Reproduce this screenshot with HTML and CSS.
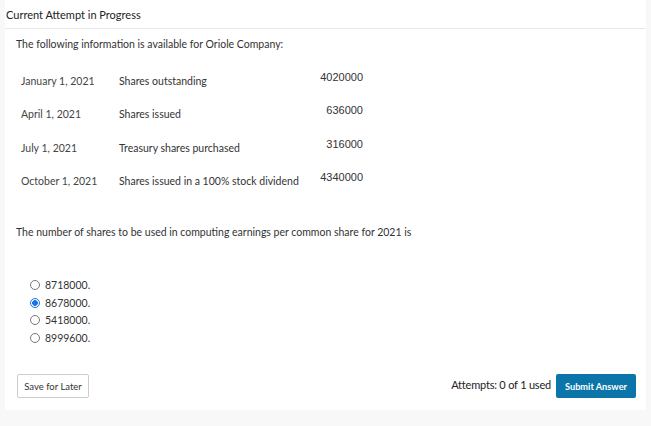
FILE: index.html
```html
<!DOCTYPE html>
<html>
<head>
<meta charset="utf-8">
<link rel="stylesheet" href="styles.css">
</head>
<body>
<div class="panel">
  <div class="head">Current Attempt in Progress</div>
  <div class="content">
    <p class="intro">The following information is available for Oriole Company:</p>
    <div class="data">
      <div class="row"><span class="date">January 1, 2021</span><span class="desc">Shares outstanding</span><span class="num">4020000</span></div>
      <div class="row"><span class="date">April 1, 2021</span><span class="desc">Shares issued</span><span class="num">636000</span></div>
      <div class="row"><span class="date">July 1, 2021</span><span class="desc">Treasury shares purchased</span><span class="num">316000</span></div>
      <div class="row"><span class="date">October 1, 2021</span><span class="desc">Shares issued in a 100% stock dividend</span><span class="num">4340000</span></div>
    </div>
    <p class="question">The number of shares to be used in computing earnings per common share for 2021 is</p>
    <div class="options">
      <label class="opt"><span class="radio"></span>8718000.</label>
      <label class="opt"><span class="radio on"></span>8678000.</label>
      <label class="opt"><span class="radio"></span>5418000.</label>
      <label class="opt"><span class="radio"></span>8999600.</label>
    </div>
  </div>
  <div class="foot">
    <button class="save">Save for Later</button>
    <div class="right">
      <span class="attempts">Attempts: 0 of 1 used</span>
      <button class="submit">Submit Answer</button>
    </div>
  </div>
</div>
</body>
</html>
```

FILE: styles.css
```css
html, body {
  margin: 0;
  padding: 0;
  background: #f8f8f8;
  font-family: Lato, "Open Sans", sans-serif;
  color: #333;
}
.panel {
  margin: 0 5px;
  width: 641px;
  height: 410px;
  background: #fff;
  display: flex;
  flex-direction: column;
}
.head {
  height: 29px;
  border-bottom: 1px solid #e8e8e8;
  box-sizing: border-box;
  padding: 8px 0 0 1px;
  font-size: 11px;
  color: #222;
}
.content {
  padding: 0 0 0 11px;
  font-size: 10.5px;
}
.intro {
  margin: 9px 0 0 0;
  line-height: 13px;
}
.data {
  margin: 20px 0 0 5px;
  display: flex;
  flex-direction: column;
}
.row {
  display: grid;
  grid-template-columns: 98px 190px 54px;
  height: 33.3px;
  align-items: start;
}
.date {
  color: #444;
  line-height: 13px;
  padding-top: 4px;
}
.desc {
  color: #333;
  line-height: 13px;
  padding-top: 4px;
}
.num {
  font-family: "Liberation Sans", Arial, sans-serif;
  font-size: 11px;
  text-align: right;
  line-height: 13px;
  padding-top: 0;
  color: #333;
}
.question {
  margin: 22px 0 0 0;
  line-height: 13px;
}
.options {
  margin: 37px 0 0 14px;
  display: flex;
  flex-direction: column;
}
.opt {
  display: flex;
  align-items: center;
  height: 17.7px;
  gap: 5px;
  color: #333;
}
.radio {
  width: 10px;
  height: 10px;
  border: 1px solid #777;
  border-radius: 50%;
  box-sizing: border-box;
  background: #fff;
}
.radio.on {
  border: 1px solid #1a73e8;
  background: radial-gradient(circle, #1a73e8 0 2.6px, #fff 3.1px);
}
.foot {
  margin-top: auto;
  height: 36px;
  display: flex;
  justify-content: space-between;
  align-items: flex-start;
  padding: 0 10px 0 12px;
}
.save {
  width: 72px;
  height: 24px;
  border: 1px solid #ccc;
  border-radius: 2px;
  background: #fff;
  font-family: Lato, sans-serif;
  font-size: 9.5px;
  color: #333;
  padding: 0;
}
.right {
  display: flex;
  align-items: center;
  gap: 5px;
}
.attempts {
  font-size: 11px;
  color: #222;
  letter-spacing: -0.2px;
  padding-bottom: 3px;
}
.submit {
  width: 80px;
  height: 24px;
  border: none;
  border-radius: 2px;
  background: #0b74a8;
  color: #fff;
  font-family: Lato, sans-serif;
  font-weight: bold;
  font-size: 9.2px;
  padding: 0;
}
```
